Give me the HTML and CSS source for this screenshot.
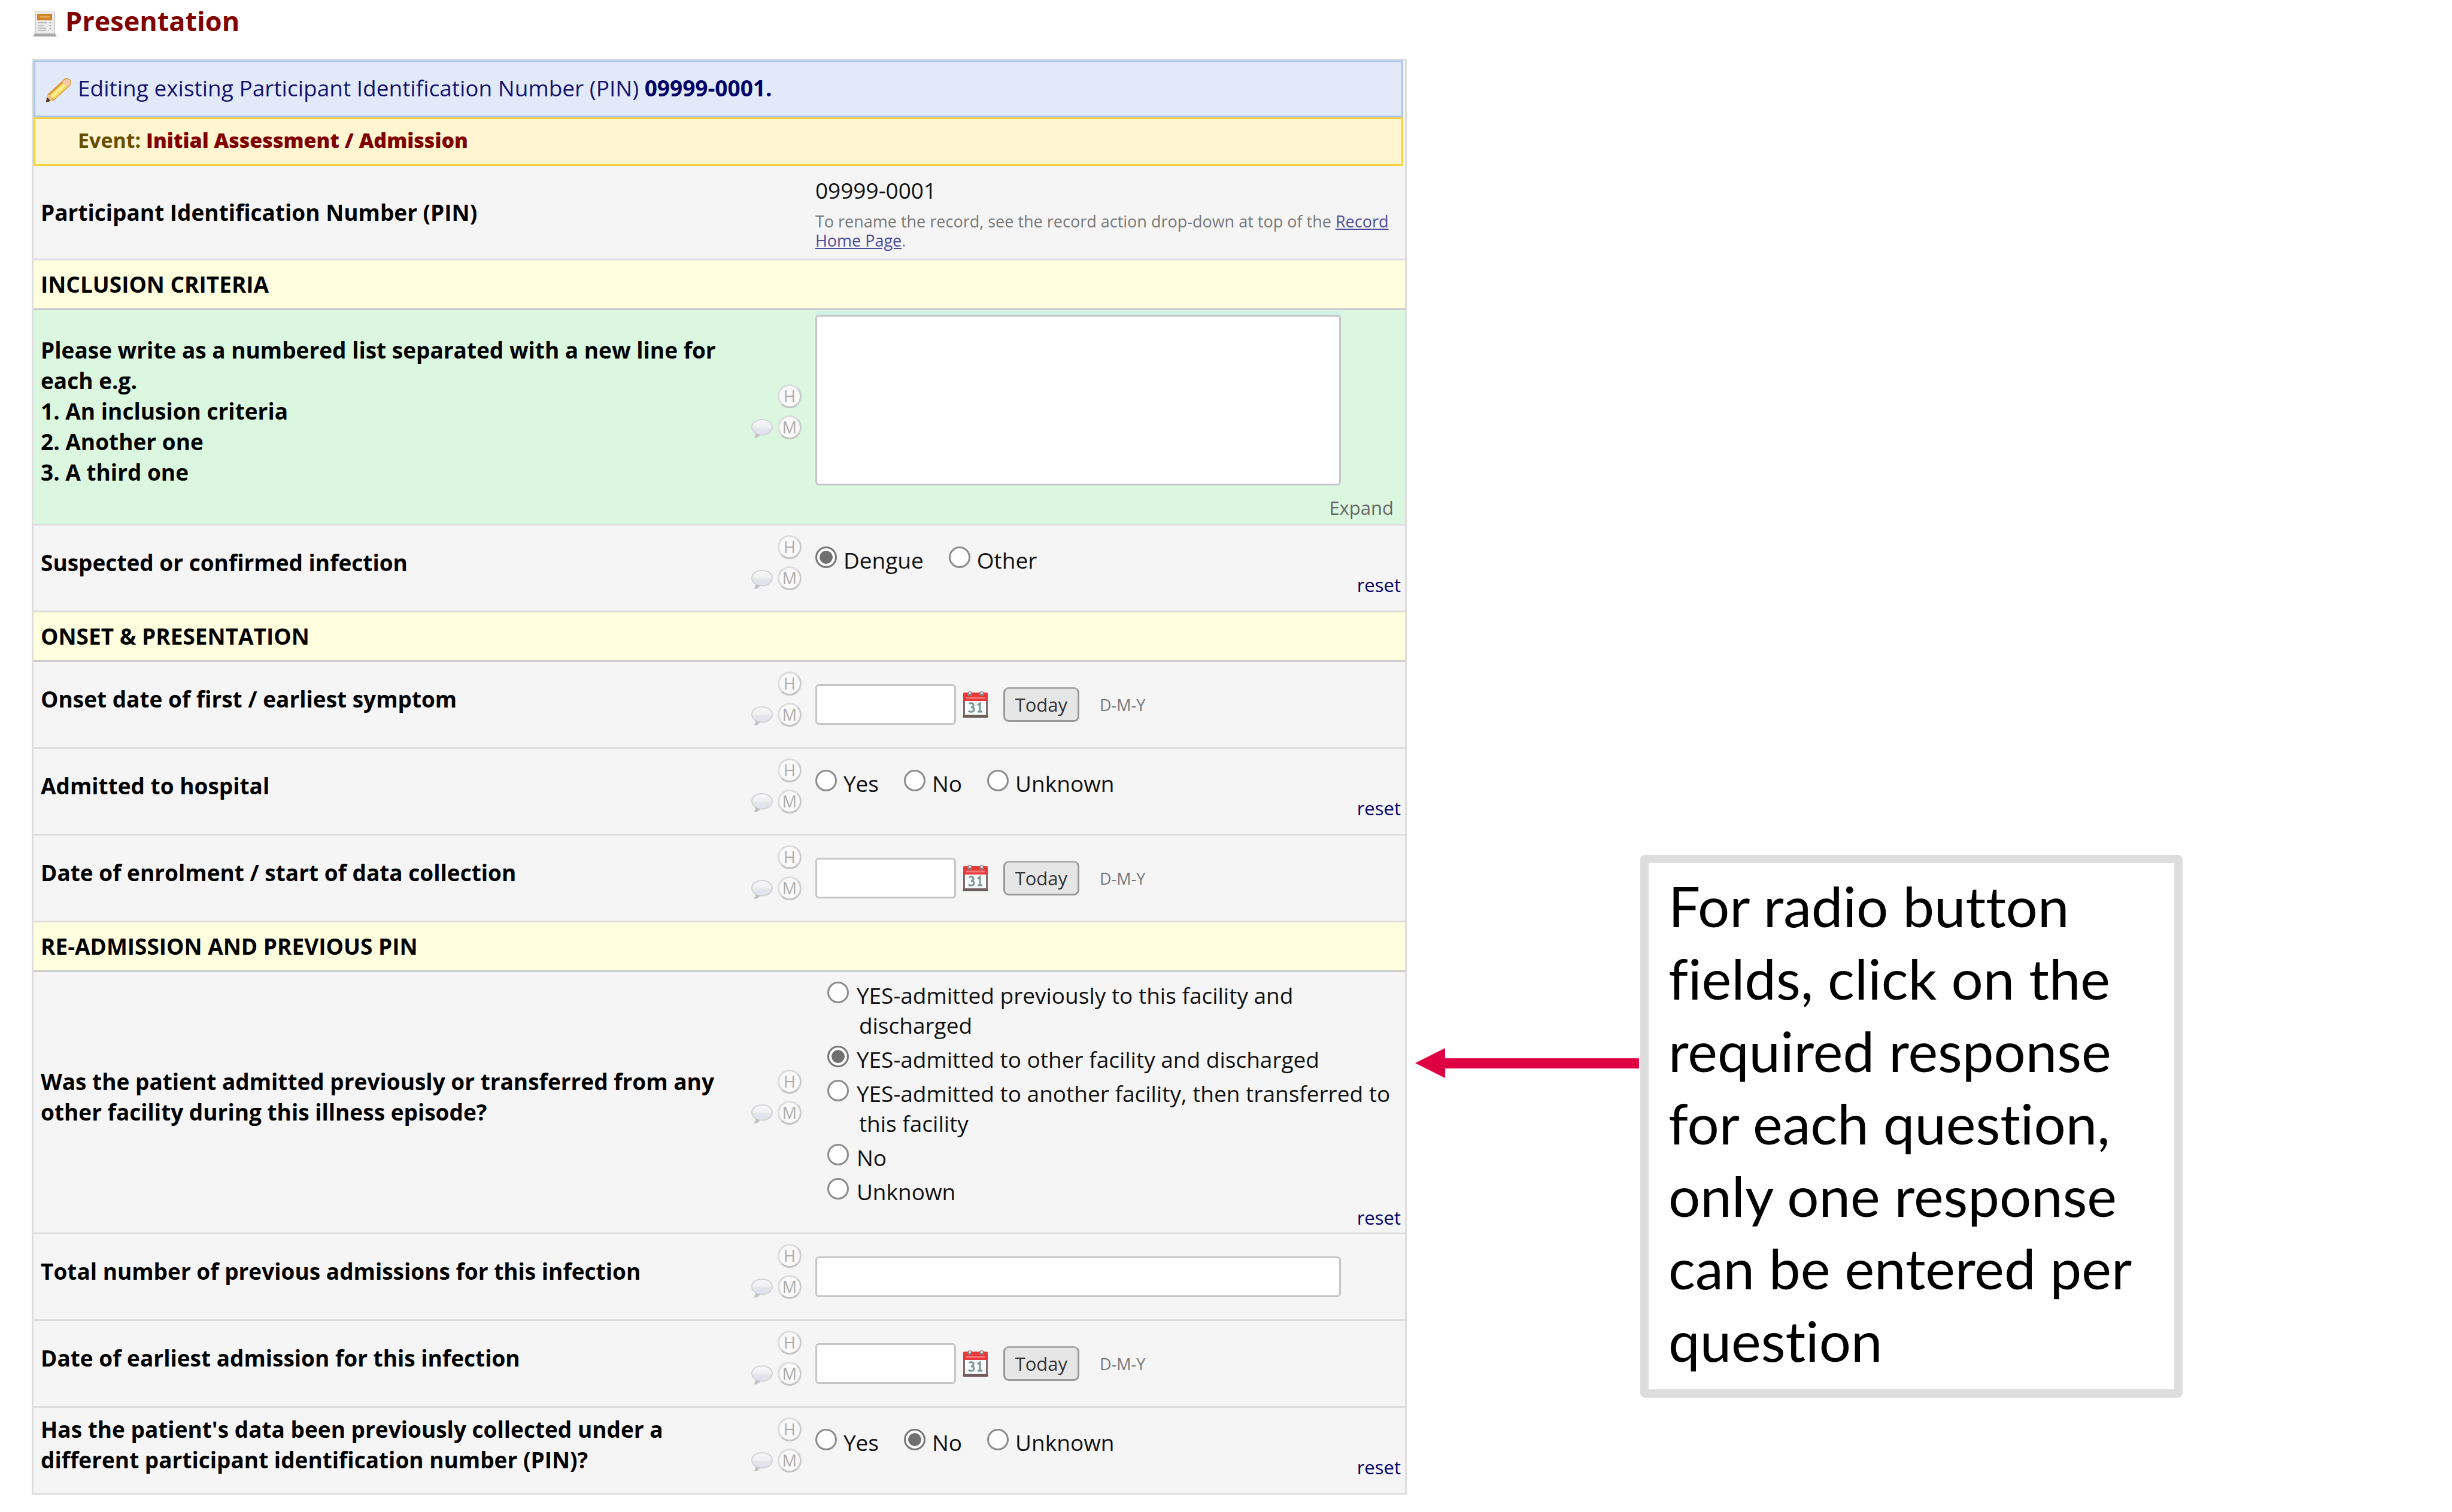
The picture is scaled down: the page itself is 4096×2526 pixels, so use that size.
FILE: index.html
```html
<!DOCTYPE html>
<html lang="en">
<head>
<meta charset="utf-8">
<title>Presentation</title>
<link rel="stylesheet" href="styles.css">
</head>
<body>
<svg class="sprites" aria-hidden="true">
  <defs>
    <linearGradient id="bubble-fill" x1="0" y1="0" x2="0" y2="1">
      <stop offset="0" stop-color="#f8f8f8"/>
      <stop offset="0.4" stop-color="#f0f0f3"/>
      <stop offset="0.5" stop-color="#e4e4ec"/>
      <stop offset="1" stop-color="#e0e0f2"/>
    </linearGradient>
    <symbol id="bubble" viewBox="0 0 38 34">
      <path d="M19 2C9 2 2 7.500 2 14.500c0 4.500 3 8.500 7 10.500 0 3-1 5-2.500 7 4 0 7-2 8.500-5 1 .3 2.500.5 4 .5 10 0 17-6 17-13S29 2 19 2z" fill="url(#bubble-fill)" stroke="#d4d4d6" stroke-width="2"/>
      <path d="M9 25c0 3-1 5-2.500 7 4 0 7-2 8.500-5z" fill="#c0c0c4"/>
    </symbol>
    <symbol id="calendar" viewBox="0 0 43 46">
      <rect x="1" y="4" width="41" height="39" rx="2" fill="#7d6a6a"/>
      <rect x="0" y="41" width="43" height="4" rx="2" fill="#6f5d5d"/>
      <rect x="4" y="15" width="35" height="25" fill="#f3fbfb"/>
      <path d="M1 17V5a2 2 0 0 1 2-2h37a2 2 0 0 1 2 2v12z" fill="#e8383c"/>
      <path d="M6 12h31" stroke="#f37a78" stroke-width="3"/>
      <circle cx="12" cy="5" r="4" fill="#8a7d7d"/>
      <circle cx="12" cy="4" r="2" fill="#e6dede"/>
      <circle cx="32" cy="5" r="4" fill="#8a7d7d"/>
      <circle cx="32" cy="4" r="2" fill="#e6dede"/>
      <path d="M11 22c3-3 8-1 7 3-.5 2-2 2.500-4 2.500 3 0 5 1 5 4 0 4-6 5-9 2M25 24l4-3v14M25 35h8" fill="none" stroke="#7f9494" stroke-width="3"/>
    </symbol>
  </defs>
</svg>

<main class="page">
  <section class="instrument">
    <h1 class="title">
      <svg class="title-icon" viewBox="0 0 40 44" aria-hidden="true">
        <path d="M4 1h32v38H4z" fill="#ececec" stroke="#d8d8d8" stroke-width="1"/>
        <rect x="7" y="5" width="25" height="11" rx="1" fill="#cf8424"/>
        <path d="M11 10h17" stroke="#e3a85a" stroke-width="3"/>
        <path d="M8 20h16M8 25h10M8 29h14M8 33h14M27 20h4M27 25h4M27 30h4" stroke="#bdbdbd" stroke-width="2"/>
        <path d="M3 38h34l3 5H0z" fill="#a8a8a8"/>
        <path d="M36 3v35M4 3v35" stroke="#cfcfcf" stroke-width="2"/>
      </svg>
      <span>Presentation</span>
    </h1>

    <form class="form">
      <div class="banner banner-record">
        <svg class="pencil" viewBox="0 0 44 42" aria-hidden="true">
          <path d="M1 40l2-12L29 4c4-5 9-4 12-1s3 7-1 11L14 38z" fill="#d99a3c"/>
          <path d="M6 30L31 7l7 7L14 36z" fill="#f7d95c"/>
          <path d="M8 31L31 10l3 3-23 21z" fill="#fcee9a"/>
          <path d="M30 5c4-4 8-3 10-1s3 6-1 9l-3 2-8-8z" fill="#f3c9a6"/>
          <path d="M1 40l2-11c5-1 9 3 9 9z" fill="#efc08a"/>
          <path d="M1 41l1-8c3 1 5 3 6 6z" fill="#4a3c28"/>
        </svg>
        <span>Editing existing Participant Identification Number (PIN) <b>09999-0001.</b></span>
      </div>
      <div class="banner banner-event"><span>Event: <b>Initial Assessment / Admission</b></span></div>

      <div class="row row-pin">
        <div class="label">Participant Identification Number (PIN)</div>
        <div class="data">
          <span class="value">09999-0001</span>
          <p class="hint">To rename the record, see the record action drop-down at top of the <a href="#">Record Home Page</a>.</p>
        </div>
      </div>

      <h2 class="section">INCLUSION CRITERIA</h2>

      <div class="row row-active">
        <label class="label" for="criteria">Please write as a numbered list separated with a new line for each e.g.<br>1. An inclusion criteria<br>2. Another one<br>3. A third one</label>
        <div class="tools">
          <button type="button" class="tool tool-h">H</button>
          <button type="button" class="tool-note" aria-label="Comment"><svg viewBox="0 0 38 34"><use href="#bubble"/></svg></button>
          <button type="button" class="tool">M</button>
        </div>
        <div class="data data-notes">
          <textarea id="criteria" class="notes"></textarea>
          <a class="expand" href="#">Expand</a>
        </div>
      </div>

      <div class="row">
        <div class="label" id="l-infection">Suspected or confirmed infection</div>
        <div class="tools">
          <button type="button" class="tool tool-h">H</button>
          <button type="button" class="tool-note" aria-label="Comment"><svg viewBox="0 0 38 34"><use href="#bubble"/></svg></button>
          <button type="button" class="tool">M</button>
        </div>
        <div class="data data-choice" role="radiogroup" aria-labelledby="l-infection">
          <div class="choices">
            <label class="choice"><input type="radio" name="infection" checked><span>Dengue</span></label>
            <label class="choice"><input type="radio" name="infection"><span>Other</span></label>
          </div>
          <a class="reset" href="#">reset</a>
        </div>
      </div>

      <h2 class="section">ONSET &amp; PRESENTATION</h2>

      <div class="row">
        <label class="label" for="onset">Onset date of first / earliest symptom</label>
        <div class="tools">
          <button type="button" class="tool tool-h">H</button>
          <button type="button" class="tool-note" aria-label="Comment"><svg viewBox="0 0 38 34"><use href="#bubble"/></svg></button>
          <button type="button" class="tool">M</button>
        </div>
        <div class="data data-date">
          <input type="text" id="onset" class="text date">
          <svg class="calendar" viewBox="0 0 43 46" aria-hidden="true"><use href="#calendar"/></svg>
          <button type="button" class="today">Today</button>
          <span class="format">D-M-Y</span>
        </div>
      </div>

      <div class="row">
        <div class="label" id="l-admitted">Admitted to hospital</div>
        <div class="tools">
          <button type="button" class="tool tool-h">H</button>
          <button type="button" class="tool-note" aria-label="Comment"><svg viewBox="0 0 38 34"><use href="#bubble"/></svg></button>
          <button type="button" class="tool">M</button>
        </div>
        <div class="data data-choice" role="radiogroup" aria-labelledby="l-admitted">
          <div class="choices">
            <label class="choice"><input type="radio" name="admitted"><span>Yes</span></label>
            <label class="choice"><input type="radio" name="admitted"><span>No</span></label>
            <label class="choice"><input type="radio" name="admitted"><span>Unknown</span></label>
          </div>
          <a class="reset" href="#">reset</a>
        </div>
      </div>

      <div class="row">
        <label class="label" for="enrolment">Date of enrolment / start of data collection</label>
        <div class="tools">
          <button type="button" class="tool tool-h">H</button>
          <button type="button" class="tool-note" aria-label="Comment"><svg viewBox="0 0 38 34"><use href="#bubble"/></svg></button>
          <button type="button" class="tool">M</button>
        </div>
        <div class="data data-date">
          <input type="text" id="enrolment" class="text date">
          <svg class="calendar" viewBox="0 0 43 46" aria-hidden="true"><use href="#calendar"/></svg>
          <button type="button" class="today">Today</button>
          <span class="format">D-M-Y</span>
        </div>
      </div>

      <h2 class="section">RE-ADMISSION AND PREVIOUS PIN</h2>

      <div class="row">
        <div class="label" id="l-previous">Was the patient admitted previously or transferred from any other facility during this illness episode?</div>
        <div class="tools">
          <button type="button" class="tool tool-h">H</button>
          <button type="button" class="tool-note" aria-label="Comment"><svg viewBox="0 0 38 34"><use href="#bubble"/></svg></button>
          <button type="button" class="tool">M</button>
        </div>
        <div class="data data-list" role="radiogroup" aria-labelledby="l-previous">
          <div class="choice-list">
            <label class="choice"><input type="radio" name="previous"><span>YES-admitted previously to this facility and discharged</span></label>
            <label class="choice"><input type="radio" name="previous" checked><span>YES-admitted to other facility and discharged</span></label>
            <label class="choice"><input type="radio" name="previous"><span>YES-admitted to another facility, then transferred to this facility</span></label>
            <label class="choice"><input type="radio" name="previous"><span>No</span></label>
            <label class="choice"><input type="radio" name="previous"><span>Unknown</span></label>
          </div>
          <a class="reset" href="#">reset</a>
        </div>
      </div>

      <div class="row">
        <label class="label" for="total">Total number of previous admissions for this infection</label>
        <div class="tools">
          <button type="button" class="tool tool-h">H</button>
          <button type="button" class="tool-note" aria-label="Comment"><svg viewBox="0 0 38 34"><use href="#bubble"/></svg></button>
          <button type="button" class="tool">M</button>
        </div>
        <div class="data data-date">
          <input type="text" id="total" class="text wide">
        </div>
      </div>

      <div class="row">
        <label class="label" for="earliest">Date of earliest admission for this infection</label>
        <div class="tools">
          <button type="button" class="tool tool-h">H</button>
          <button type="button" class="tool-note" aria-label="Comment"><svg viewBox="0 0 38 34"><use href="#bubble"/></svg></button>
          <button type="button" class="tool">M</button>
        </div>
        <div class="data data-date">
          <input type="text" id="earliest" class="text date">
          <svg class="calendar" viewBox="0 0 43 46" aria-hidden="true"><use href="#calendar"/></svg>
          <button type="button" class="today">Today</button>
          <span class="format">D-M-Y</span>
        </div>
      </div>

      <div class="row">
        <div class="label" id="l-otherpin">Has the patient's data been previously collected under a different participant identification number (PIN)?</div>
        <div class="tools">
          <button type="button" class="tool tool-h">H</button>
          <button type="button" class="tool-note" aria-label="Comment"><svg viewBox="0 0 38 34"><use href="#bubble"/></svg></button>
          <button type="button" class="tool">M</button>
        </div>
        <div class="data data-choice" role="radiogroup" aria-labelledby="l-otherpin">
          <div class="choices">
            <label class="choice"><input type="radio" name="otherpin"><span>Yes</span></label>
            <label class="choice"><input type="radio" name="otherpin" checked><span>No</span></label>
            <label class="choice"><input type="radio" name="otherpin"><span>Unknown</span></label>
          </div>
          <a class="reset" href="#">reset</a>
        </div>
      </div>
    </form>
  </section>

  <div class="arrow" aria-hidden="true">
    <svg class="arrow-head" viewBox="0 0 50 50"><path d="M0 25L50 0v50z" fill="#de0043"/></svg>
    <div class="arrow-shaft"></div>
  </div>
  <aside class="callout">For radio button fields, click on the required response for each question, only one response can be entered per question</aside>
</main>
</body>
</html>
```
FILE: styles.css
```css
* {
  box-sizing: border-box;
}

body {
  margin: 0;
  background: #fff;
  color: #111;
  font-family: "Open Sans", "Noto Sans", sans-serif;
  font-size: 37px;
  line-height: 51px;
}

button,
input,
textarea {
  font: inherit;
  margin: 0;
}

a {
  text-decoration: none;
}

.sprites {
  position: absolute;
  width: 0;
  height: 0;
}

.page {
  display: grid;
  grid-template-columns: 2297fr 390fr 906fr;
  align-items: start;
  padding: 0 450px 0 53px;
}

/* Title */

.title {
  display: flex;
  align-items: center;
  gap: 14px;
  margin: 0;
  padding: 8px 2px 36px;
  color: #800000;
  font-size: 45px;
  line-height: 54px;
}

.title-icon {
  width: 40px;
  height: 44px;
  margin-top: 10px;
}

/* Form frame and banners */

.form {
  border: 3px solid #ddd;
  border-bottom: 0;
  background: #f5f5f5;
}

.banner {
  display: flex;
  align-items: center;
  gap: 10px;
  margin-right: 3px;
  border: 3px solid;
}

.banner-record {
  padding: 17px 17px 21px;
  border-color: #a9c5f2;
  background: #e2eafa;
  color: #13136e;
}

.banner-record b {
  color: #000066;
}

.banner-event {
  padding: 10px 71px 14px;
  border-color: #f5d03f;
  background: #fff5d1;
  color: #664d00;
  font-size: 34px;
  font-weight: 700;
}

.banner-event b {
  color: #800000;
}

.pencil {
  width: 44px;
  height: 42px;
  margin-top: 8px;
}

/* Rows */

.section {
  margin: 0;
  padding: 14px 12px 15px;
  border-bottom: 3px solid #ccc;
  background: #ffffe0;
  color: #000;
  font-size: 37px;
  line-height: 51px;
}

.row {
  display: grid;
  grid-template-columns: 1fr 109px 43%;
  align-items: center;
  min-height: 145px;
  border-bottom: 3px solid #ddd;
}

.row-pin {
  grid-template-columns: 1fr 43%;
}

.row-active {
  background: #dbf7df;
}

.label {
  padding: 0 12px 20px;
  color: #000;
  font-weight: 700;
}

.row-pin .label {
  padding-bottom: 0;
}

.data {
  padding-right: 7px;
}

.value {
  display: block;
  line-height: 46px;
}

.row-pin .data {
  padding: 18px 20px 14px 0;
}

.hint {
  margin: 13px 0 0;
  color: #777;
  font-size: 27px;
  line-height: 32px;
}

.hint a {
  color: #4b4b9b;
  text-decoration: underline;
}

/* History, comment and missing-data buttons */

.tools {
  display: grid;
  grid-template-columns: 40px 40px;
  gap: 12px 6px;
  align-items: center;
  padding-bottom: 18px;
}

.tool,
.tool-note {
  display: block;
  width: 40px;
  height: 40px;
  padding: 0;
  border: 0;
  background: none;
}

.tool {
  border: 3px solid #dcdcdc;
  border-bottom-color: #c2c2c2;
  border-right-color: #cccccc;
  border-radius: 50%;
  background: #f9f9f9;
  color: #adadad;
  font-size: 27px;
  line-height: 32px;
  text-align: center;
}

.tool-h {
  grid-column: 2;
}

.tool-note svg {
  display: block;
  width: 38px;
  height: 34px;
  margin: 5px 1px 1px;
}

/* Text boxes */

.text,
.notes {
  display: block;
  border: 3px solid #c6c6c6;
  border-radius: 6px;
  background: #fff;
}

.text {
  height: 68px;
  padding: 0 8px;
}

.date {
  width: 235px;
}

.wide {
  width: 878px;
}

.notes {
  width: 878px;
  height: 285px;
  padding: 8px;
  box-shadow: 0 -6px 0 #cff2e4;
  resize: none;
}

.data-notes {
  padding: 8px 19px 7px 0;
}

.expand {
  display: block;
  margin-top: 17px;
  color: #666;
  font-size: 31px;
  line-height: 40px;
  text-align: right;
}

.data-date {
  display: flex;
  align-items: center;
}

.calendar {
  width: 43px;
  height: 46px;
  margin: 0 25px 0 11px;
}

.today {
  width: 127px;
  height: 58px;
  padding: 0;
  border: 3px solid #999;
  border-top-color: #acacac;
  border-radius: 9px;
  background: #e6e6e6;
  color: #333;
  font-size: 31px;
  line-height: 52px;
}

.format {
  margin-left: 34px;
  color: #777;
  font-size: 27px;
}

/* Radio choices */

.data-choice {
  align-self: start;
  padding-top: 35px;
}

.choices {
  display: flex;
  gap: 42px;
}

.choice {
  display: flex;
  align-items: flex-start;
  gap: 11px;
  line-height: 46px;
}

.choice input {
  flex: none;
  width: 36px;
  height: 36px;
  padding: 4px;
  border: 3px solid #8c8c8c;
  border-radius: 50%;
  background: #fff content-box;
  appearance: none;
}

.choice input:not(:checked) {
  background: #fff;
}

.choice input:checked {
  border-color: #777;
  background: #707070 content-box;
  box-shadow: inset 0 0 0 4px #fff;
}

.data-list {
  padding-top: 14px;
  padding-bottom: 7px;
}

.choice-list {
  display: grid;
  gap: 7px;
  padding-left: 20px;
}

.choice-list .choice {
  line-height: 50px;
}

.choice-list input {
  margin-top: 2px;
}

.choice-list span {
  padding-left: 6px;
  text-indent: -4px;
}

.reset {
  display: block;
  color: #000066;
  font-size: 31px;
  line-height: 36px;
  text-align: right;
}

/* Callout */

.arrow {
  display: flex;
  align-items: center;
  margin-top: 1751px;
  padding: 0 2px 0 14px;
}

.arrow-head {
  flex: none;
  width: 50px;
  height: 50px;
}

.arrow-shaft {
  flex: 1;
  height: 17px;
  background: #de0043;
}

.callout {
  margin-top: 1428px;
  padding: 10px 33px 22px;
  border: 14px solid #ddd;
  border-radius: 8px;
  background: #fff;
  color: #000;
  font-family: Lato, "Open Sans", sans-serif;
  font-size: 94px;
  font-variant-ligatures: none;
  line-height: 121px;
}
```
